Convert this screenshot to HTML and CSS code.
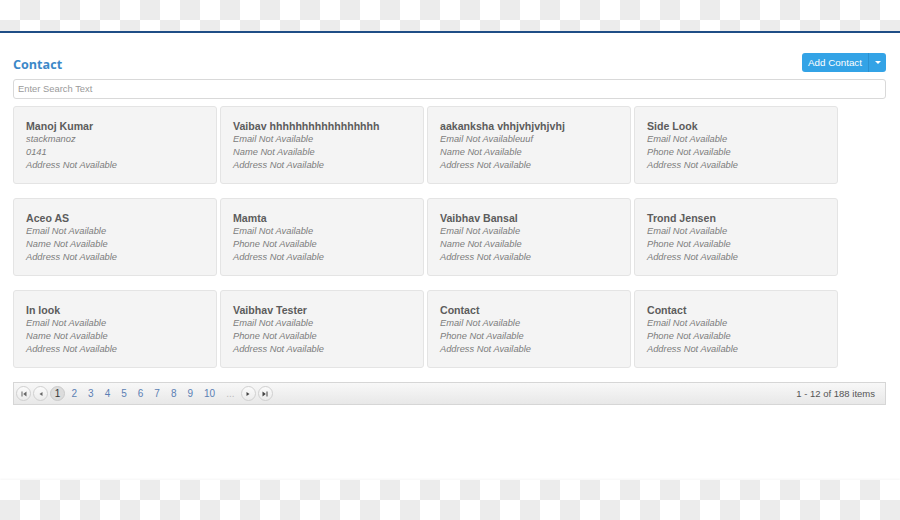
FILE: index.html
```html
<!DOCTYPE html>
<html>
<head>
<meta charset="utf-8">
<link rel="stylesheet" href="styles.css">
</head>
<body>
<div class="checker checker-top"></div>
<div class="page">
  <div class="header">
    <h1 class="title">Contact</h1>
    <div class="split-btn">
      <span class="btn-main">Add Contact</span>
      <span class="btn-caret"><span class="caret"></span></span>
    </div>
  </div>
  <div class="search">Enter Search Text</div>
  <div class="cards">
    <div class="card"><div class="name">Manoj Kumar</div><div class="line">stackmanoz</div><div class="line">0141</div><div class="line">Address Not Available</div></div>
    <div class="card"><div class="name">Vaibav hhhhhhhhhhhhhhhhh</div><div class="line">Email Not Available</div><div class="line">Name Not Available</div><div class="line">Address Not Available</div></div>
    <div class="card"><div class="name">aakanksha vhhjvhjvhjvhj</div><div class="line">Email Not Availableuuf</div><div class="line">Name Not Available</div><div class="line">Address Not Available</div></div>
    <div class="card"><div class="name">Side Look</div><div class="line">Email Not Available</div><div class="line">Phone Not Available</div><div class="line">Address Not Available</div></div>
    <div class="card"><div class="name">Aceo AS</div><div class="line">Email Not Available</div><div class="line">Name Not Available</div><div class="line">Address Not Available</div></div>
    <div class="card"><div class="name">Mamta</div><div class="line">Email Not Available</div><div class="line">Phone Not Available</div><div class="line">Address Not Available</div></div>
    <div class="card"><div class="name">Vaibhav Bansal</div><div class="line">Email Not Available</div><div class="line">Name Not Available</div><div class="line">Address Not Available</div></div>
    <div class="card"><div class="name">Trond Jensen</div><div class="line">Email Not Available</div><div class="line">Phone Not Available</div><div class="line">Address Not Available</div></div>
    <div class="card"><div class="name">In look</div><div class="line">Email Not Available</div><div class="line">Name Not Available</div><div class="line">Address Not Available</div></div>
    <div class="card"><div class="name">Vaibhav Tester</div><div class="line">Email Not Available</div><div class="line">Phone Not Available</div><div class="line">Address Not Available</div></div>
    <div class="card"><div class="name">Contact</div><div class="line">Email Not Available</div><div class="line">Phone Not Available</div><div class="line">Address Not Available</div></div>
    <div class="card"><div class="name">Contact</div><div class="line">Email Not Available</div><div class="line">Phone Not Available</div><div class="line">Address Not Available</div></div>
  </div>
  <div class="pager">
    <div class="pages">
      <span class="circ"><svg width="8" height="8" viewBox="0 0 8 8"><rect x="1.5" y="1.5" width="1" height="5" fill="#666"/><path d="M6.5 1.5 L3.2 4 L6.5 6.5 Z" fill="#666"/></svg></span>
      <span class="circ"><svg width="8" height="8" viewBox="0 0 8 8"><path d="M5.5 2 L2.5 4 L5.5 6 Z" fill="#666"/></svg></span>
      <span class="circ sel">1</span>
      <span class="num">2</span><span class="num">3</span><span class="num">4</span><span class="num">5</span><span class="num">6</span><span class="num">7</span><span class="num">8</span><span class="num">9</span><span class="num">10</span><span class="num dots">...</span>
      <span class="circ"><svg width="8" height="8" viewBox="0 0 8 8"><path d="M2.5 2 L5.5 4 L2.5 6 Z" fill="#444"/></svg></span>
      <span class="circ"><svg width="8" height="8" viewBox="0 0 8 8"><path d="M1.5 1.5 L4.8 4 L1.5 6.5 Z" fill="#444"/><rect x="5.5" y="1.5" width="1" height="5" fill="#444"/></svg></span>
    </div>
    <div class="info">1 - 12 of 188 items</div>
  </div>
</div>
<div class="checker checker-bottom"></div>
</body>
</html>
```

FILE: styles.css
```css
html, body {
  margin: 0;
  padding: 0;
  background: #fff;
}
body {
  width: 900px;
  height: 520px;
  display: flex;
  flex-direction: column;
  font-family: "Liberation Sans", Arial, sans-serif;
  overflow: hidden;
}
.checker {
  background: conic-gradient(#ececec 0 25%, #fff 0 50%, #ececec 0 75%, #fff 0);
  background-size: 40px 40px;
  flex: none;
}
.checker-top {
  height: 31px;
  border-bottom: 2px solid #1f4e86;
}
.checker-bottom {
  height: 40px;
  box-shadow: 0 -1px 2px rgba(0, 0, 0, 0.04);
}
.page {
  flex: 1;
  padding: 20px 14px 0 13px;
}
.header {
  display: flex;
  justify-content: space-between;
  align-items: flex-end;
  height: 19px;
}
.title {
  margin: 0;
  font-family: "Open Sans", sans-serif;
  font-weight: 700;
  font-size: 12.6px;
  line-height: 16px;
  color: #3b88c8;
  position: relative;
  top: 1px;
}
.split-btn {
  display: flex;
  height: 19px;
  border-radius: 3px;
  background: #33a3e6;
  color: #fff;
  font-size: 9.8px;
  overflow: hidden;
}
.btn-main {
  width: 67px;
  display: flex;
  align-items: center;
  justify-content: center;
  border-right: 1px solid #2b91d0;
  box-sizing: border-box;
}
.btn-caret {
  width: 17px;
  display: flex;
  align-items: center;
  justify-content: center;
}
.caret {
  width: 0;
  height: 0;
  border-left: 3px solid transparent;
  border-right: 3px solid transparent;
  border-top: 3px solid #fff;
}
.search {
  margin-top: 7px;
  height: 20px;
  box-sizing: border-box;
  border: 1px solid #d9d9d9;
  border-radius: 3px;
  padding-left: 4px;
  font-size: 9.4px;
  line-height: 18px;
  color: #9a9a9a;
}
.cards {
  margin-top: 7px;
  display: grid;
  grid-template-columns: repeat(4, 204px);
  grid-auto-rows: 78px;
  column-gap: 3px;
  row-gap: 14px;
}
.card {
  background: #f4f4f4;
  border: 1px solid #e4e4e4;
  border-radius: 3px;
  padding: 13px 12px 0 12px;
}
.name {
  font-weight: 700;
  font-size: 10.6px;
  line-height: 13px;
  color: #5c5c5c;
  white-space: nowrap;
}
.line {
  font-style: italic;
  font-size: 9.3px;
  line-height: 13px;
  color: #7c7c7c;
  white-space: nowrap;
}
.pager {
  margin-top: 14px;
  height: 23px;
  box-sizing: border-box;
  border: 1px solid #d6d6d6;
  background: linear-gradient(#f8f8f8, #e8e8e8);
  display: flex;
  align-items: center;
  justify-content: space-between;
  padding: 0 10px 0 1px;
}
.pages {
  display: flex;
  align-items: center;
}
.circ {
  width: 15px;
  height: 15px;
  box-sizing: border-box;
  margin: 0 1px;
  border: 1px solid #d0d0d0;
  border-radius: 50%;
  background: linear-gradient(#fbfbfb, #ececec);
  display: flex;
  align-items: center;
  justify-content: center;
  font-size: 10px;
  color: #444;
}
.circ.sel {
  background: #dcdcdc;
  border-color: #cacaca;
  color: #333;
}
.num {
  padding: 0 5.5px;
  font-size: 10px;
  color: #5b7fb4;
  line-height: 15px;
}
.num.dots {
  color: #bbb;
}
.info {
  font-size: 9.5px;
  color: #555;
}
```
